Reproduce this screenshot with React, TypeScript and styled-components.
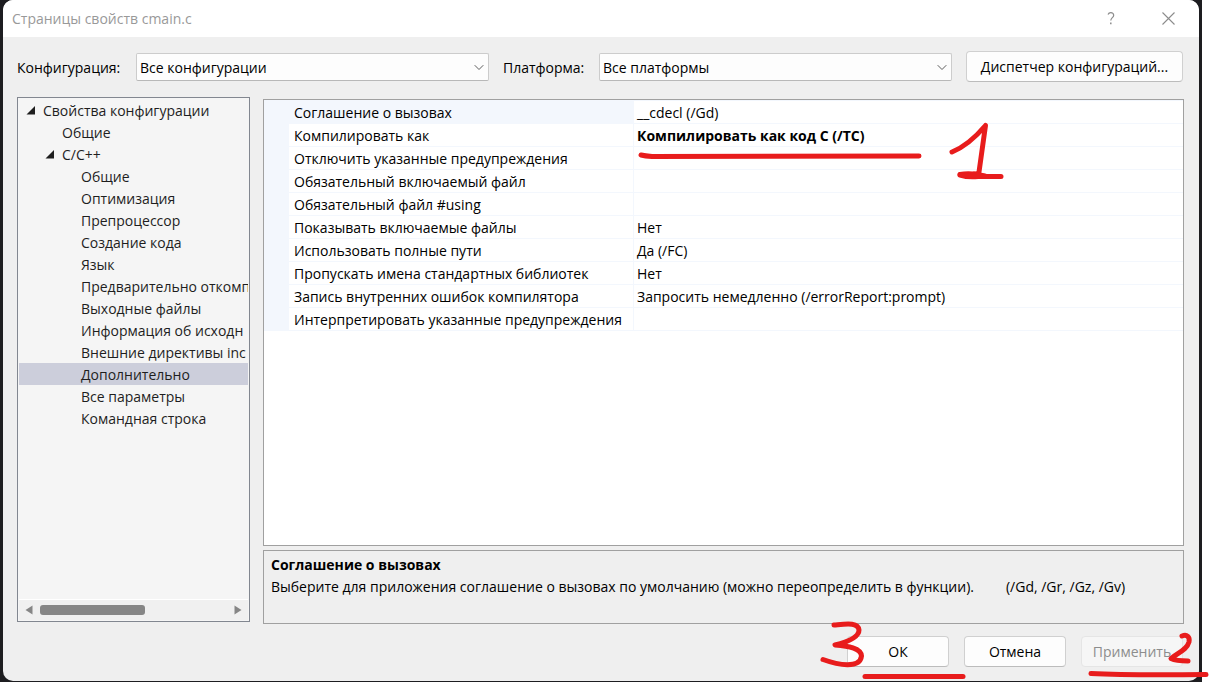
import React from "react";
import styled, { createGlobalStyle, css } from "styled-components";

const GlobalStyle = createGlobalStyle`
  * { box-sizing: border-box; }
  body { margin: 0; background: #ffffff; }
  body, button, select, table {
    font-family: "Open Sans", "Noto Sans", sans-serif;
    font-size: 14px;
    line-height: 22px;
    color: #000000;
  }
`;

const Backdrop = styled.div`
  display: flex;
  min-height: 100vh;
  margin-right: 8px;
  padding: 0 3px 1px;
  background: #1d1d20;
`;

const Dialog = styled.main`
  flex: 1;
  min-width: 0;
  display: flex;
  flex-direction: column;
  background: #efefef;
  border-radius: 10px;
`;

const TitleBar = styled.header`
  display: flex;
  align-items: center;
  height: 37px;
  padding: 0 16px 0 9px;
  background: #ffffff;
  border-radius: 10px 10px 0 0;
`;

const Title = styled.h1`
  flex: 1;
  margin: 0;
  font-size: 14px;
  font-weight: 400;
  color: #999999;
`;

const CaptionButton = styled.button`
  display: grid;
  place-items: center;
  width: 30px;
  height: 30px;
  margin-left: 27px;
  padding: 0;
  border: 0;
  background: transparent;
  color: #8c8c8c;
`;

const Toolbar = styled.div`
  display: flex;
  align-items: center;
  padding: 14px 16px 0 14px;
`;

const FieldLabel = styled.label<{ $width: number }>`
  flex: none;
  width: ${(p) => p.$width}px;
  padding-top: 2px;
`;

const SelectBox = styled.div`
  position: relative;
  flex: 1;
  min-width: 0;
  margin-right: 14px;
`;

const Select = styled.select`
  display: block;
  width: 100%;
  height: 28px;
  padding: 2px 28px 0 3px;
  appearance: none;
  background: #fdfdfd;
  border: 1px solid #cccccc;
  border-bottom-color: #b8b8b8;
  border-radius: 2px;
`;

const SelectArrow = styled.svg`
  position: absolute;
  right: 5px;
  top: 11px;
  pointer-events: none;
`;

const Button = styled.button<{ $width: number }>`
  width: ${(p) => p.$width}px;
  height: 31px;
  padding: 0;
  white-space: nowrap;
  background: #fdfdfd;
  border: 1px solid #d0d0d0;
  border-bottom-color: #bcbcbc;
  border-radius: 4px;
  &:disabled {
    color: #8d8d8d;
    background: #f6f6f6;
    border-color: #e5e5e5;
  }
`;

const Content = styled.div`
  flex: 1;
  display: flex;
  gap: 13px;
  padding: 15px 15px 0 14px;
`;

const TreePanel = styled.nav`
  flex: none;
  width: 233px;
  display: flex;
  flex-direction: column;
  margin-bottom: 2px;
  padding: 1px;
  background: #f5f5f5;
  border: 1px solid #828790;
`;

const TreeList = styled.ul`
  flex: 1;
  margin: 0;
  padding: 0;
  list-style: none;
  overflow: hidden;
`;

const TreeItem = styled.li<{ $level: number; $selected?: boolean }>`
  display: flex;
  align-items: center;
  height: 22px;
  padding-top: 2px;
  padding-left: ${(p) => 5 + p.$level * 19}px;
  white-space: nowrap;
  color: #1e1e1e;
  ${(p) => p.$selected && css`background: #cccedb;`}
`;

const Expander = styled.svg`
  flex: none;
  width: 19px;
  height: 10px;
`;

const ScrollBar = styled.div`
  display: flex;
  align-items: center;
  height: 21px;
  padding: 0 6px;
  background: #f0f0f0;
  border-top: 1px solid #ffffff;
`;

const ScrollArrow = styled.button`
  display: block;
  width: 8px;
  height: 10px;
  padding: 0;
  border: 0;
  background: transparent;
  svg { display: block; }
`;

const ScrollTrack = styled.div`
  flex: 1;
  padding: 0 7px;
`;

const ScrollThumb = styled.div`
  width: 56%;
  height: 10px;
  border-radius: 3px;
  background: #868686;
`;

const Details = styled.section`
  flex: 1;
  min-width: 0;
  display: flex;
  flex-direction: column;
  gap: 4px;
  padding-top: 2px;
`;

const GridPanel = styled.div`
  position: relative;
  flex: 1;
  background: #ffffff;
  border: 1px solid #a0a0a0;
`;

const PropertyTable = styled.table`
  width: 100%;
  table-layout: fixed;
  border-collapse: separate;
  border-spacing: 0;
  border-top: 1px solid #f3f7fd;
  line-height: 20px;
`;

const GutterCell = styled.td`
  width: 25px;
  padding: 0;
  background: #f3f7fd;
`;

const NameCell = styled.th<{ $active?: boolean }>`
  width: 345px;
  height: 23px;
  padding: 2px 0 0 5px;
  font-weight: 400;
  text-align: left;
  white-space: nowrap;
  border-bottom: 1px solid #f3f7fd;
  border-right: 1px solid #f3f7fd;
  ${(p) => p.$active && css`background: #f3f7fd;`}
`;

const ValueCell = styled.td<{ $changed?: boolean }>`
  padding: 2px 0 0 3px;
  white-space: nowrap;
  border-bottom: 1px solid #f3f7fd;
  font-weight: ${(p) => (p.$changed ? 700 : 400)};
`;

const Description = styled.div`
  height: 74px;
  padding: 3px 7px;
  border: 1px solid #a0a0a0;
`;

const DescriptionTitle = styled.h2`
  margin: 0;
  font-size: 14px;
  line-height: 22px;
`;

const DescriptionText = styled.p`
  display: flex;
  gap: 32px;
  margin: 0;
  white-space: nowrap;
`;

const Footer = styled.footer`
  display: flex;
  justify-content: flex-end;
  gap: 15px;
  padding: 12px 16px 14px;
`;

const ButtonSlot = styled.div`
  position: relative;
`;

const Marker = styled.svg<{ $x: number; $y: number }>`
  position: absolute;
  left: ${(p) => p.$x}px;
  top: ${(p) => p.$y}px;
  pointer-events: none;
  fill: none;
  stroke: #e81c1c;
  stroke-width: 5;
  stroke-linecap: round;
  stroke-linejoin: round;
`;

type Node = { text: string; level: number; open?: boolean; selected?: boolean };

const nodes: Node[] = [
  { text: "Свойства конфигурации", level: 0, open: true },
  { text: "Общие", level: 1 },
  { text: "C/C++", level: 1, open: true },
  { text: "Общие", level: 2 },
  { text: "Оптимизация", level: 2 },
  { text: "Препроцессор", level: 2 },
  { text: "Создание кода", level: 2 },
  { text: "Язык", level: 2 },
  { text: "Предварительно откомп", level: 2 },
  { text: "Выходные файлы", level: 2 },
  { text: "Информация об исходн", level: 2 },
  { text: "Внешние директивы inc", level: 2 },
  { text: "Дополнительно", level: 2, selected: true },
  { text: "Все параметры", level: 2 },
  { text: "Командная строка", level: 2 },
];

type Property = { name: string; value: string; active?: boolean; changed?: boolean };

const properties: Property[] = [
  { name: "Соглашение о вызовах", value: "__cdecl (/Gd)", active: true },
  { name: "Компилировать как", value: "Компилировать как код C (/TC)", changed: true },
  { name: "Отключить указанные предупреждения", value: "" },
  { name: "Обязательный включаемый файл", value: "" },
  { name: "Обязательный файл #using", value: "" },
  { name: "Показывать включаемые файлы", value: "Нет" },
  { name: "Использовать полные пути", value: "Да (/FC)" },
  { name: "Пропускать имена стандартных библиотек", value: "Нет" },
  { name: "Запись внутренних ошибок компилятора", value: "Запросить немедленно (/errorReport:prompt)" },
  { name: "Интерпретировать указанные предупреждения", value: "" },
];

function Chevron() {
  return (
    <SelectArrow width="10" height="7" viewBox="0 0 10 7" fill="none" stroke="#5c5c5c" aria-hidden="true">
      <path d="M0.7 1.2 5 5.5 9.3 1.2" />
    </SelectArrow>
  );
}

export default function App() {
  return (
    <>
      <GlobalStyle />
      <Backdrop>
        <Dialog>
          <TitleBar>
            <Title>Страницы свойств cmain.c</Title>
            <CaptionButton aria-label="Справка">
              <svg width="8" height="13" viewBox="0 0 8 13" fill="none" stroke="currentColor" strokeWidth="1.2">
                <path d="M1 2.6C1.6 1.2 2.6.7 3.8.7 5.6.7 6.7 1.7 6.7 3.2 6.7 5.6 3.8 5.8 3.8 8.6" />
                <path d="M3.8 10.6V12.2" strokeWidth="1.5" />
              </svg>
            </CaptionButton>
            <CaptionButton aria-label="Закрыть">
              <svg width="13" height="13" viewBox="0 0 13 13" stroke="currentColor" strokeWidth="1.1">
                <path d="M.5.5 12.5 12.5M12.5.5.5 12.5" />
              </svg>
            </CaptionButton>
          </TitleBar>

          <Toolbar>
            <FieldLabel $width={119} htmlFor="configuration">Конфигурация:</FieldLabel>
            <SelectBox>
              <Select id="configuration">
                <option>Все конфигурации</option>
              </Select>
              <Chevron />
            </SelectBox>
            <FieldLabel $width={96} htmlFor="platform">Платформа:</FieldLabel>
            <SelectBox>
              <Select id="platform">
                <option>Все платформы</option>
              </Select>
              <Chevron />
            </SelectBox>
            <Button $width={217}>Диспетчер конфигураций...</Button>
          </Toolbar>

          <Content>
            <TreePanel>
              <TreeList>
                {nodes.map((node, i) => (
                  <TreeItem key={i} $level={node.level} $selected={node.selected}>
                    <Expander viewBox="0 0 19 10" aria-hidden="true">
                      {node.open && <path d="M11 0V8.500H2.500Z" fill="#1e1e1e" />}
                    </Expander>
                    {node.text}
                  </TreeItem>
                ))}
              </TreeList>
              <ScrollBar>
                <ScrollArrow aria-label="Влево">
                  <svg width="8" height="10"><path d="M7.5.5V9.5L.5 5Z" fill="#868686" /></svg>
                </ScrollArrow>
                <ScrollTrack>
                  <ScrollThumb />
                </ScrollTrack>
                <ScrollArrow aria-label="Вправо">
                  <svg width="8" height="10"><path d="M.5.5V9.5L7.5 5Z" fill="#868686" /></svg>
                </ScrollArrow>
              </ScrollBar>
            </TreePanel>

            <Details>
              <GridPanel>
                <PropertyTable>
                  <tbody>
                    {properties.map((p) => (
                      <tr key={p.name}>
                        <GutterCell />
                        <NameCell scope="row" $active={p.active}>{p.name}</NameCell>
                        <ValueCell $changed={p.changed}>{p.value}</ValueCell>
                      </tr>
                    ))}
                  </tbody>
                </PropertyTable>
                <Marker $x={366} $y={10} width="380" height="80" viewBox="630 110 380 80" aria-hidden="true">
                  <path d="M641 155Q645 156 652 156.500L919 156" />
                  <path d="M952 152Q969 145 985.500 125.500L979 172Q978 174 974 174" />
                  <path d="M960 174.500Q968 173 977 174.500T986 176.500H1001" />
                  <path d="M960 175Q968 177.500 978 176.500H986" />
                </Marker>
              </GridPanel>
              <Description>
                <DescriptionTitle>Соглашение о вызовах</DescriptionTitle>
                <DescriptionText>
                  <span>Выберите для приложения соглашение о вызовах по умолчанию (можно переопределить в функции).</span>
                  <span>(/Gd, /Gr, /Gz, /Gv)</span>
                </DescriptionText>
              </Description>
            </Details>
          </Content>

          <Footer>
            <ButtonSlot>
              <Button $width={102}>ОК</Button>
              <Marker $x={-32} $y={-21} width="155" height="66" viewBox="815 615 155 66" aria-hidden="true">
                <path d="M834 625C846 624 858 622 859 630C859 637 847 642 835 645C848 646 861 648 861.500 656C860 669 838 665 823 659.500" />
                <path d="M865 676.500H963" />
              </Marker>
            </ButtonSlot>
            <Button $width={102}>Отмена</Button>
            <ButtonSlot>
              <Button $width={102} disabled>Применить</Button>
              <Marker $x={-1} $y={-6} width="130" height="52" viewBox="1080 630 130 52" aria-hidden="true">
                <path d="M1182 636C1187 634 1190 637 1189 642C1187 650 1177 653 1171 658.500C1176 661 1182 661 1188 661" />
                <path d="M1091 673.500C1120 675 1155 675 1206 674.500" />
              </Marker>
            </ButtonSlot>
          </Footer>
        </Dialog>
      </Backdrop>
    </>
  );
}
